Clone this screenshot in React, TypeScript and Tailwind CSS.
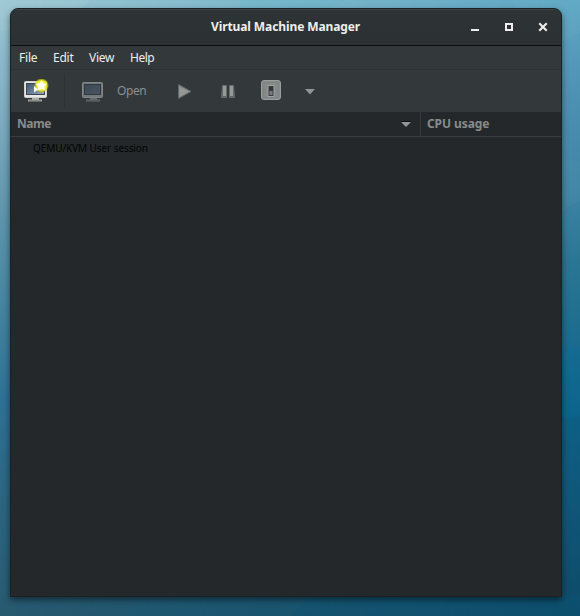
import React from "react";

function Wallpaper() {
  return (
    <svg className="absolute inset-0 h-full w-full" viewBox="0 0 580 616" preserveAspectRatio="none">
      <defs>
        <linearGradient id="west" x1="0" y1="0" x2="0" y2="1">
          <stop offset="0" stopColor="#9bc7d3" />
          <stop offset=".17" stopColor="#82aec2" />
          <stop offset=".33" stopColor="#6298ae" />
          <stop offset=".5" stopColor="#4585a0" />
          <stop offset=".65" stopColor="#2f7195" />
          <stop offset=".82" stopColor="#2c6580" />
          <stop offset="1" stopColor="#285a70" />
        </linearGradient>
        <linearGradient id="east" x1="0" y1="0" x2="0" y2="1">
          <stop offset="0" stopColor="#5ea7c3" />
          <stop offset=".16" stopColor="#4c90b2" />
          <stop offset=".3" stopColor="#4085a5" />
          <stop offset=".42" stopColor="#2a7693" />
          <stop offset=".56" stopColor="#1a6b8e" />
          <stop offset=".68" stopColor="#0d5f85" />
          <stop offset=".82" stopColor="#0f5678" />
          <stop offset="1" stopColor="#0e4b68" />
        </linearGradient>
        <linearGradient id="across">
          <stop offset="0" stopColor="#000" />
          <stop offset="1" stopColor="#fff" />
        </linearGradient>
        <mask id="fade"><rect width="580" height="616" fill="url(#across)" /></mask>
      </defs>
      <rect width="580" height="616" fill="url(#west)" />
      <rect width="580" height="616" fill="url(#east)" mask="url(#fade)" />
      <path d="M0 0H90L60 30H0Z" fill="#fff" opacity=".06" />
      <path d="M240 0H345L310 20H240Z" fill="#5cb4c8" opacity=".2" />
      <path d="M510 0H580V32L560 42Z" fill="#7cc0d0" opacity=".12" />
      <path d="M560 158L580 161V200L560 212Z" fill="#4d92ac" opacity=".25" />
      <path d="M560 347H580V415L560 420Z" fill="#0a6c9a" opacity=".3" />
      <path d="M120 616L145 595H310L292 616Z" fill="#17607a" opacity=".18" />
      <path d="M310 595H580V616H292Z" fill="#07587a" opacity=".25" />
    </svg>
  );
}

function Computer({ fresh = false }: { fresh?: boolean }) {
  const id = fresh ? "new" : "open";
  return (
    <svg width="26" height="24" viewBox="0 0 26 24" className="block">
      <defs>
        <linearGradient id={id} x1="0" y1="0" x2="1" y2="1">
          <stop stopColor={fresh ? "#3d5472" : "#3c4854"} />
          <stop offset="1" stopColor={fresh ? "#94a3b9" : "#4a5562"} />
        </linearGradient>
        <radialGradient id="glow">
          <stop offset=".55" stopColor="#f7f52c" />
          <stop offset=".75" stopColor="#e1df16" stopOpacity=".85" />
          <stop offset="1" stopColor="#cfd000" stopOpacity="0" />
        </radialGradient>
      </defs>
      <path d="M9 19H16V20.5H19V22.5H5V20.5H9Z" fill={fresh ? "#a9aaa5" : "#656968"} />
      <path d="M6 22H18" stroke={fresh ? "#686b69" : "#505554"} />
      {fresh ? (
        <rect x="1.5" y="2.5" width="22" height="16" rx="1" fill="#e6e6e2" stroke="#d0d1cd" />
      ) : (
        <rect x="1.5" y="3.5" width="20" height="15" rx="1" fill="#747878" stroke="#828686" />
      )}
      {fresh ? (
        <rect x="3.5" y="4.5" width="18" height="11" fill="url(#new)" stroke="#3c4651" />
      ) : (
        <rect x="3.5" y="5.5" width="16" height="10" fill="url(#open)" stroke="#303940" />
      )}
      {fresh && (
        <>
          <rect x="11" y="-1" width="15" height="15" fill="url(#glow)" />
          <path d="M11 7L15 10.5L11 13.5Z" fill="#fff" />
          <path d="M18.5 1L20.2 4.3L24 4.8L21.3 7.6L22 11.5L18.5 9.7L14.5 11.5L15.3 7.6L12.5 4.8L16.8 4.3Z" fill="#fffff0" />
        </>
      )}
    </svg>
  );
}

export default function App() {
  return (
    <div className="relative h-[616px] w-[580px] overflow-hidden pt-2 pl-[10px] font-['Noto_Sans',sans-serif]">
      <Wallpaper />
      <main className="relative flex h-[589px] w-[552px] flex-col overflow-hidden rounded-t-[8px] border border-[#1b2022] bg-[#24282a] shadow-[0_3px_6px_rgba(0,0,0,0.5)]">
        <header className="relative flex h-[37px] shrink-0 items-center border-t border-b border-t-[#3a4245] border-b-[#0b0d0e] bg-linear-to-b from-[#2e3436] to-[#2b3032] pb-0.5">
          <h1 className="ml-[200px] w-[150px] text-[12px] leading-4 font-bold tracking-[-0.1px] whitespace-nowrap text-[#eeeeec]">Virtual Machine Manager</h1>
          <svg className="ml-[109px] block shrink-0" width="80" height="12" viewBox="0 0 80 12">
            <path d="M1 8H9V10H1Z" fill="#eeeeec" />
            <path d="M36 3H42V9H36Z" fill="none" stroke="#eeeeec" strokeWidth="2" />
            <path d="M70 3L76 9M76 3L70 9" stroke="#eeeeec" strokeWidth="2.1" strokeLinecap="square" />
          </svg>
        </header>
        <nav className="flex h-[24px] shrink-0 items-center border-b border-[#2c3133] bg-[#33393b] text-[12px] leading-4 tracking-[-0.1px] text-[#eeeeec]">
          <span className="ml-2 w-[34px] tracking-[-0.2px]">File</span>
          <span className="w-[36px] tracking-[-0.25px]">Edit</span>
          <span className="w-[41px] tracking-[-0.3px]">View</span>
          <span className="tracking-[-0.5px]">Help</span>
        </nav>
        <section className="flex h-[42px] shrink-0 items-center bg-[#33393b]">
          <div className="ml-3"><Computer fresh /></div>
          <div className="ml-[15px] h-[34px] w-px bg-[#2d3335]" />
          <div className="ml-4"><Computer /></div>
          <span className="ml-[10px] w-[59px] text-[12px] leading-4 tracking-[-0.4px] text-[#8b8f8f]">Open</span>
          <svg className="relative top-px" width="16" height="18" viewBox="0 0 16 18">
            <path d="M2.5 1.5L15 8.5L2.5 15.5Z" fill="#8b8f8e" stroke="#60686a" strokeLinejoin="round" />
            <path d="M3.5 4L12.5 8.5L3.5 13.5Z" fill="#959897" />
          </svg>
          <svg className="relative top-px ml-[28px]" width="16" height="16" viewBox="0 0 16 16">
            <path d="M2.5 1.5H6.5V13.5H1.5ZM9.5 1.5H13.5L14.5 13.5H9.5Z" fill="#5f6767" stroke="#656c6c" />
            <path d="M3 2H6V12H3ZM10 2H13V12H10Z" fill="#959998" />
          </svg>
          <svg className="ml-[25px]" width="22" height="22" viewBox="0 0 22 22">
            <rect x=".5" y=".5" width="19" height="19" rx="2.5" fill="#868a89" stroke="#9a9e9d" />
            <rect x="2.5" y="2.5" width="15" height="15" fill="#858988" stroke="#7f8382" />
            <rect x="7" y="5.5" width="6" height="11" fill="#393e40" stroke="#a1a4a3" />
            <path d="M8 7H12V10H8Z" fill="#303638" />
            <path d="M8.5 11H11.5V15H8.5Z" fill="#777c7b" />
          </svg>
          <svg className="relative top-px ml-[22px]" width="10" height="6" viewBox="0 0 10 6"><path d="M0 0H10L5 5.5Z" fill="#909494" /></svg>
        </section>
        <section className="flex h-[25px] shrink-0 border-b border-[#373d3f] text-[12px] leading-6 font-bold tracking-[-0.08px] text-[#898b8b]">
          <div className="flex w-[410px] items-center border-r border-[#373d3f] pl-1.5">
            <span className="tracking-[-0.5px]">Name</span>
            <svg className="mt-px mr-[9px] ml-auto" width="10" height="7" viewBox="0 0 10 7"><path d="M0 .5H10" stroke="#0e1011" /><path d="M0 1H10L5 6Z" fill="#949696" /></svg>
          </div>
          <span className="pl-1.5">CPU usage</span>
        </section>
        <div className="pt-[3px] pl-[22px] text-[10px] leading-4 tracking-[-0.08px] text-[#030404]">QEMU/KVM User session</div>
      </main>
    </div>
  );
}
